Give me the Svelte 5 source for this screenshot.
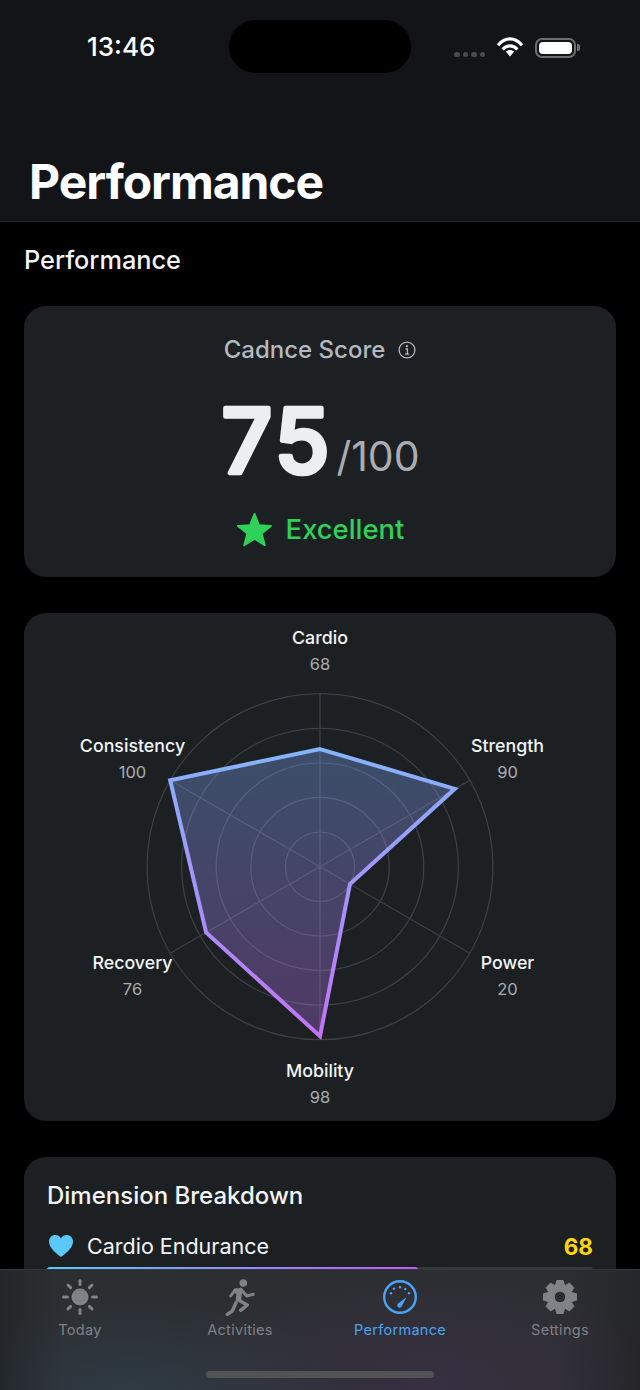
<script>
  const cx = 230, cy = 253.7, R = 173;
  const axes = [
    { name: 'Cardio', v: 68, lx: 230, ly: 31 },
    { name: 'Strength', v: 90, lx: 417.5, ly: 139 },
    { name: 'Power', v: 20, lx: 417.5, ly: 356 },
    { name: 'Mobility', v: 98, lx: 230, ly: 464 },
    { name: 'Recovery', v: 76, lx: 42.5, ly: 356 },
    { name: 'Consistency', v: 100, lx: 42.5, ly: 139 }
  ].map((a, i) => {
    const t = (i * Math.PI) / 3;
    return { ...a, ex: cx + R * Math.sin(t), ey: cy - R * Math.cos(t),
      px: cx + R * (a.v / 100) * Math.sin(t), py: cy - R * (a.v / 100) * Math.cos(t) };
  });
  const poly = axes.map((a) => `${a.px.toFixed(1)},${a.py.toFixed(1)}`).join(' ');
  const rings = [0.2, 0.4, 0.6, 0.8, 1];

  // Gear outline: eight teeth, one pointing straight up
  function gearPath() {
    const pts = [];
    const outer = 16.8, inner = 12.6;
    for (let i = 0; i < 8; i++) {
      const c = (i * Math.PI) / 4 - Math.PI / 2;
      [[-0.36, inner], [-0.19, outer], [0.19, outer], [0.36, inner]].forEach(([d, r]) => {
        pts.push(`${(19 + r * Math.cos(c + d)).toFixed(2)} ${(19 + r * Math.sin(c + d)).toFixed(2)}`);
      });
    }
    return `M${pts.join('L')}Z M19 13.2a5.800 5.800 0 1 0 0 11.600a5.800 5.800 0 1 0 0-11.600Z`;
  }
  const gear = gearPath();
</script>

<div class="screen">
  <header class="navbar">
    <div class="status">
      <span class="time">13:46</span>
      <div class="island"></div>
      <div class="status-icons">
        <div class="dots"><i></i><i></i><i></i><i></i></div>
        <svg class="wifi" width="28" height="21" viewBox="0 0 28 21" fill="none" stroke="#fff" stroke-width="3.2">
          <path d="M2 8.200C9-.2 19-.2 26 8.200" />
          <path d="M6.600 12.400c4.400-4.600 10.400-4.600 14.800 0" />
          <path fill="#fff" stroke="none" d="M9.800 14.600c2.600-2.200 5.800-2.200 8.400 0L14 19.600z" />
        </svg>
        <div class="battery"><div class="cell"></div></div>
        <div class="nub"></div>
      </div>
    </div>
    <h1>Performance</h1>
  </header>

  <main>
    <h2 class="section">Performance</h2>

    <section class="card score">
      <div class="score-title">
        <span>Cadnce Score</span>
        <svg width="18" height="18" viewBox="0 0 18 18" fill="none" stroke="#b4b8bc">
          <circle cx="9" cy="9" r="7.900" stroke-width="1.300" />
          <path d="M7.400 8h2v5M7 13.200h4.200" stroke-width="1.300" />
          <circle cx="8.900" cy="5.200" r="1.100" fill="#b4b8bc" stroke="none" />
        </svg>
      </div>
      <div class="score-value">
        <svg class="big" width="110" height="92" viewBox="0 0 110 92"><text x="57" y="80">75</text></svg>
        <span class="max">/100</span>
      </div>
      <div class="rating">
        <svg width="37" height="35" viewBox="0 0 37 35">
          <path fill="#30d158" stroke="#30d158" stroke-width="2" stroke-linejoin="round" d="M18.500 2l4.400 11.200 12 .7-9.300 7.600 3.100 11.600-10.200-6.500-10.200 6.500 3.100-11.600L2 13.900l12-.7z" />
        </svg>
        <span>Excellent</span>
      </div>
    </section>

    <section class="card radar">
      <svg width="592" height="508" viewBox="-66 0 592 508">
        <defs>
          <linearGradient id="fillG" x1="0" y1="0" x2="0" y2="1">
            <stop offset="0" stop-color="#7fb0ff" stop-opacity="0.32" />
            <stop offset="1" stop-color="#bf6ff5" stop-opacity="0.32" />
          </linearGradient>
          <linearGradient id="strokeG" x1="0" y1="0" x2="0" y2="1">
            <stop offset="0" stop-color="#84b4fc" />
            <stop offset="1" stop-color="#c274f4" />
          </linearGradient>
        </defs>
        {#each rings as r}
          <circle cx={cx} cy={cy} r={R * r} fill="none" stroke="#3c3f43" stroke-width="1.300" />
        {/each}
        {#each axes as a}
          <line x1={cx} y1={cy} x2={a.ex} y2={a.ey} stroke="#3c3f43" stroke-width="1.300" />
        {/each}
        <polygon points={poly} fill="url(#fillG)" stroke="none" />
        <polygon points={poly} fill="none" stroke="url(#strokeG)" stroke-width="4" stroke-linejoin="miter" />
        {#each axes as a}
          <text x={a.lx} y={a.ly} class="axis-name">{a.name}</text>
          <text x={a.lx} y={a.ly + 26} class="axis-val">{a.v}</text>
        {/each}
      </svg>
    </section>

    <section class="card breakdown">
      <h3>Dimension Breakdown</h3>
      <div class="dim-row">
        <svg class="heart" width="26" height="24" viewBox="0 0 26 24">
          <path fill="#5ac8fa" d="M13 23C9 20 1 14.500 1 7.600 1 3.700 4 1 7.300 1 9.700 1 11.800 2.200 13 4.300 14.200 2.200 16.300 1 18.700 1 22 1 25 3.700 25 7.600 25 14.500 17 20 13 23z" />
        </svg>
        <span class="dim-name">Cardio Endurance</span>
        <span class="dim-val">68</span>
      </div>
      <div class="track"><div class="bar" style="width: 68%"></div></div>
    </section>
  </main>

  <nav class="tabbar">
    <div class="tab">
      <svg width="38" height="38" viewBox="0 0 38 38" fill="#808285" stroke="#808285">
        <circle cx="19" cy="19" r="8.500" stroke="none" />
        <g stroke-width="3" stroke-linecap="round">
          <path d="M19 2.500v4M19 31.500v4M2.500 19h4M31.500 19h4M7 7l2.600 2.600M28.400 28.400l2.600 2.600M7 31l2.600-2.600M28.400 9.600L31 7" />
        </g>
      </svg>
      <span>Today</span>
    </div>
    <div class="tab">
      <svg width="38" height="38" viewBox="0 0 38 38" fill="none" stroke="#808285" stroke-linecap="round" stroke-linejoin="round">
        <circle cx="22.300" cy="5" r="3.800" fill="#808285" stroke="none" />
        <path stroke-width="5.500" d="M15 13l3.500 0-1 8" />
        <path stroke-width="3" d="M19.700 11l6 7 6.600-1.700M14 12l-4.300 6" />
        <path stroke-width="3.400" d="M18.300 22.500l8 4.500-6.600 5.300M15 24.700l-3.700 8.300-5 3.300" />
      </svg>
      <span>Activities</span>
    </div>
    <div class="tab active">
      <svg width="38" height="38" viewBox="0 0 38 38" fill="none" stroke="#4ba3f5">
        <circle cx="19" cy="19" r="15.800" stroke-width="2.400" />
        <path fill="#4ba3f5" stroke="none" d="M25.700 19L20.300 29Q18.200 30.300 16.800 28.900Q15.500 27.400 16.800 25.700z" />
        <g fill="#4ba3f5" stroke="none">
          <circle cx="10" cy="15.300" r="1.200" /><circle cx="13" cy="10.700" r="1.200" /><circle cx="19" cy="9.300" r="1.200" /><circle cx="24.300" cy="11" r="1.200" /><circle cx="28" cy="15.300" r="1.200" />
        </g>
      </svg>
      <span>Performance</span>
    </div>
    <div class="tab">
      <svg width="38" height="38" viewBox="0 0 38 38">
        <path fill="#808285" stroke="#808285" stroke-width="1" stroke-linejoin="round" fill-rule="evenodd" d={gear} />
      </svg>
      <span>Settings</span>
    </div>
    <div class="home"></div>
  </nav>
</div>

<style>
  :global(body) {
    margin: 0;
    background: #000;
  }
  .screen {
    position: relative;
    width: 640px;
    height: 1390px;
    overflow: hidden;
    background: #000;
    color: #fff;
    font-family: Inter, "Liberation Sans", sans-serif;
  }
  .navbar {
    height: 221px;
    background: #121417;
    border-bottom: 1px solid #1f2124;
    display: flex;
    flex-direction: column;
  }
  .status {
    height: 53px;
    margin-top: 20px;
    display: flex;
    align-items: flex-start;
  }
  .time {
    width: 229px;
    box-sizing: border-box;
    padding: 13px 0 0 87px;
    font-size: 26px;
    line-height: 28px;
    font-weight: 500;
  }
  .island {
    width: 182px;
    height: 53px;
    border-radius: 27px;
    background: #000;
  }
  .status-icons {
    display: flex;
    align-items: center;
    margin-left: 43px;
    padding-top: 17px;
  }
  .dots {
    display: flex;
    gap: 3px;
    margin-top: 14px;
    margin-right: 11px;
  }
  .dots i {
    width: 5.500px;
    height: 5.500px;
    border-radius: 50%;
    background: #4a4b4d;
  }
  .wifi {
    margin-right: 11px;
  }
  .battery {
    width: 41px;
    height: 20px;
    box-sizing: border-box;
    border: 2px solid #6d6e70;
    border-radius: 7px;
    padding: 2px;
  }
  .cell {
    width: 100%;
    height: 100%;
    background: #fff;
    border-radius: 4px;
  }
  .nub {
    width: 2.500px;
    height: 7px;
    margin-left: 1px;
    border-radius: 0 2px 2px 0;
    background: #6d6e70;
  }
  h1 {
    margin: 81px 0 0 29px;
    font-size: 48px;
    line-height: 55px;
    font-weight: 700;
    letter-spacing: -1.050px;
  }
  main {
    padding: 0 24px;
  }
  .section {
    margin: 22px 0 0;
    font-size: 25.300px;
    line-height: 32px;
    font-weight: 500;
    color: #f2f4f6;
  }
  .card {
    background: #1c2023;
    border-radius: 22px;
  }
  .score {
    margin-top: 30px;
    height: 271px;
    display: flex;
    flex-direction: column;
    align-items: center;
  }
  .score-title {
    display: flex;
    align-items: center;
    gap: 13px;
    margin-top: 28px;
    font-size: 24px;
    line-height: 32px;
    font-weight: 500;
    color: #b4b8bc;
  }
  .score-value {
    display: flex;
    align-items: flex-end;
    margin-top: 27px;
    height: 92px;
    line-height: 92px;
  }
  .big {
    display: block;
    overflow: visible;
  }
  .big text {
    font-size: 89px;
    font-weight: 500;
    letter-spacing: 3px;
    text-anchor: middle;
    fill: #eceff2;
    stroke: #eceff2;
    stroke-width: 4.500px;
    stroke-linejoin: round;
  }
  .max {
    font-size: 41px;
    line-height: 50px;
    font-weight: 400;
    color: #a9adb2;
    margin-left: 6px;
    margin-bottom: 4px;
  }
  .rating {
    display: flex;
    align-items: center;
    gap: 13px;
    margin-top: 25px;
    font-size: 27.400px;
    line-height: 38px;
    font-weight: 500;
    color: #30d158;
  }
  .radar {
    margin-top: 36px;
    height: 508px;
  }
  .radar svg {
    display: block;
  }
  .axis-name {
    font-size: 17.800px;
    font-weight: 500;
    fill: #f2f4f6;
    text-anchor: middle;
  }
  .axis-val {
    font-size: 16.500px;
    font-weight: 400;
    fill: #a9adb2;
    text-anchor: middle;
  }
  .breakdown {
    margin-top: 36px;
    height: 400px;
    padding: 24px 23px 0;
    box-sizing: border-box;
  }
  h3 {
    margin: 0;
    font-size: 24px;
    line-height: 30px;
    font-weight: 500;
    color: #f2f4f6;
  }
  .dim-row {
    display: flex;
    align-items: center;
    gap: 13px;
    margin-top: 19px;
    height: 32px;
  }
  .heart {
    margin-left: 1px;
  }
  .dim-name {
    flex: 1;
    font-size: 21.500px;
    font-weight: 400;
    color: #f2f4f6;
  }
  .dim-val {
    font-size: 22.500px;
    font-weight: 700;
    color: #ffd60a;
  }
  .track {
    height: 6px;
    margin-top: 5px;
    border-radius: 3px;
    background: #35383c;
  }
  .bar {
    height: 100%;
    border-radius: 3px;
    background: linear-gradient(90deg, #5ac8fa, #bf5af2);
  }
  .tabbar {
    position: absolute;
    left: 0;
    right: 0;
    bottom: 0;
    height: 121px;
    box-sizing: border-box;
    border-top: 1px solid #35373a;
    background:
      linear-gradient(90deg, rgba(30, 32, 34, 0.6), transparent 60px, transparent 560px, rgba(30, 30, 32, 0.5)),
      radial-gradient(ellipse 230px 100px at 130px 125px, rgba(50, 72, 88, 0.5), transparent),
      radial-gradient(ellipse 280px 120px at 430px 115px, rgba(64, 50, 80, 0.5), transparent),
      #2c2e31;
    display: grid;
    grid-template-columns: repeat(4, 160px);
  }
  .tab {
    display: flex;
    flex-direction: column;
    align-items: center;
    padding-top: 8px;
    font-size: 14.500px;
    line-height: 18px;
    font-weight: 400;
    letter-spacing: 0.3px;
    color: #808285;
  }
  .tab svg {
    display: block;
    margin-bottom: 5px;
  }
  .tab.active {
    color: #4ba3f5;
  }
  .home {
    position: absolute;
    left: 206px;
    bottom: 12px;
    width: 228px;
    height: 7px;
    border-radius: 4px;
    background: #515254;
  }
</style>
